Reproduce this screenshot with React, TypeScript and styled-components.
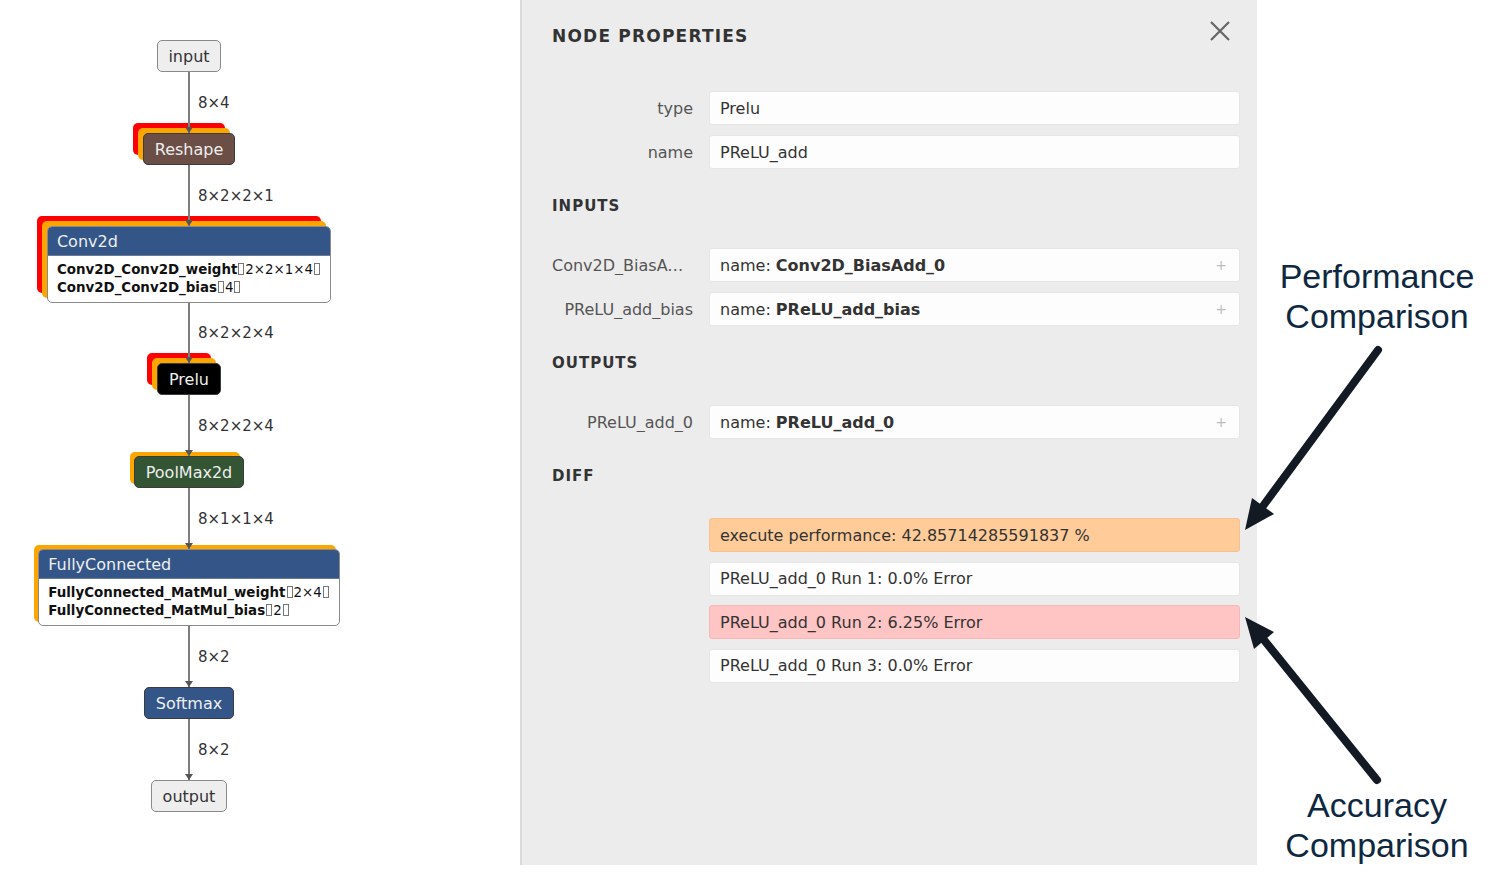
import styled, { createGlobalStyle } from 'styled-components';

const GlobalStyle = createGlobalStyle`
  html, body {
    margin: 0;
    padding: 0;
    background: #fff;
  }
  body {
    font-family: "DejaVu Sans", "Liberation Sans", sans-serif;
  }
`;

type Kind = 'io' | 'shape' | 'layer' | 'activation' | 'pool';

interface Tensor {
  name: string;
  shape: string;
}

interface GraphNode {
  title: string;
  kind: Kind;
  marks: 'none' | 'orange' | 'both';
  tensors?: Tensor[];
}

const fills: Record<Kind, string> = {
  io: '#eeeeee',
  shape: '#6b4f46',
  layer: '#335588',
  activation: '#000000',
  pool: '#335533',
};

const shadows = {
  none: 'none',
  orange: '-4px -4px 0 0 #ffa500',
  both: '-5px -5px 0 0 #ffa500, -10px -10px 0 0 #ff0000',
};

const nodes: GraphNode[] = [
  { title: 'input', kind: 'io', marks: 'none' },
  { title: 'Reshape', kind: 'shape', marks: 'both' },
  {
    title: 'Conv2d',
    kind: 'layer',
    marks: 'both',
    tensors: [
      { name: 'Conv2D_Conv2D_weight', shape: '2×2×1×4' },
      { name: 'Conv2D_Conv2D_bias', shape: '4' },
    ],
  },
  { title: 'Prelu', kind: 'activation', marks: 'both' },
  { title: 'PoolMax2d', kind: 'pool', marks: 'orange' },
  {
    title: 'FullyConnected',
    kind: 'layer',
    marks: 'orange',
    tensors: [
      { name: 'FullyConnected_MatMul_weight', shape: '2×4' },
      { name: 'FullyConnected_MatMul_bias', shape: '2' },
    ],
  },
  { title: 'Softmax', kind: 'layer', marks: 'none' },
  { title: 'output', kind: 'io', marks: 'none' },
];

// label and length of the edge that leads into each node (after the first)
const edges = [
  { label: '8×4', length: 61 },
  { label: '8×2×2×1', length: 61 },
  { label: '8×2×2×4', length: 60 },
  { label: '8×2×2×4', length: 61 },
  { label: '8×1×1×4', length: 61 },
  { label: '8×2', length: 61 },
  { label: '8×2', length: 61 },
];

const inputs = [
  { label: 'Conv2D_BiasAdd_0', value: 'Conv2D_BiasAdd_0' },
  { label: 'PReLU_add_bias', value: 'PReLU_add_bias' },
];

const diffs: { text: string; tone: 'perf' | 'ok' | 'bad' }[] = [
  { text: 'execute performance: 42.85714285591837 %', tone: 'perf' },
  { text: 'PReLU_add_0 Run 1: 0.0% Error', tone: 'ok' },
  { text: 'PReLU_add_0 Run 2: 6.25% Error', tone: 'bad' },
  { text: 'PReLU_add_0 Run 3: 0.0% Error', tone: 'ok' },
];

const toneColors = {
  perf: { bg: '#ffcc99', border: '#f5c28f' },
  ok: { bg: '#fdfdfd', border: '#e6e6e6' },
  bad: { bg: '#ffc4c4', border: '#f4b8b8' },
};

const App = () => {
  return (
    <Page>
      <GlobalStyle />
      <GraphPane>
        <GraphColumn>
          {nodes.map((node, i) => (
            <NodeGroup key={node.title}>
              {i > 0 && (
                <EdgeRow $length={edges[i - 1].length}>
                  <span />
                  <EdgeLine />
                  <EdgeLabel>{edges[i - 1].label}</EdgeLabel>
                </EdgeRow>
              )}
              {node.tensors ? (
                <Card $shadow={shadows[node.marks]}>
                  <CardHeader>{node.title}</CardHeader>
                  <CardBody>
                    {node.tensors.map(t => (
                      <div key={t.name}>
                        <b>{t.name}</b>
                        <Tofu />
                        {t.shape}
                        <Tofu />
                      </div>
                    ))}
                  </CardBody>
                </Card>
              ) : (
                <NodeBox $kind={node.kind} $shadow={shadows[node.marks]}>
                  {node.title}
                </NodeBox>
              )}
            </NodeGroup>
          ))}
        </GraphColumn>
      </GraphPane>

      <Panel>
        <PanelHeader>
          <PanelTitle>NODE PROPERTIES</PanelTitle>
          <CloseIcon width="24" height="24" viewBox="0 0 24 24">
            <path d="M3 3 L21 21 M21 3 L3 21" />
          </CloseIcon>
        </PanelHeader>

        <PropRow>
          <PropLabel>type</PropLabel>
          <ValueBox>Prelu</ValueBox>
        </PropRow>
        <PropRow>
          <PropLabel>name</PropLabel>
          <ValueBox>PReLU_add</ValueBox>
        </PropRow>

        <SectionTitle>INPUTS</SectionTitle>
        {inputs.map(item => (
          <PropRow key={item.label}>
            <PropLabel title={item.label}>{item.label}</PropLabel>
            <ValueBox>
              name:&nbsp;<b>{item.value}</b>
              <Expand>+</Expand>
            </ValueBox>
          </PropRow>
        ))}

        <SectionTitle>OUTPUTS</SectionTitle>
        <PropRow>
          <PropLabel>PReLU_add_0</PropLabel>
          <ValueBox>
            name:&nbsp;<b>PReLU_add_0</b>
            <Expand>+</Expand>
          </ValueBox>
        </PropRow>

        <SectionTitle>DIFF</SectionTitle>
        <DiffList>
          {diffs.map(d => (
            <ValueBox key={d.text} $bg={toneColors[d.tone].bg} $border={toneColors[d.tone].border}>
              {d.text}
            </ValueBox>
          ))}
        </DiffList>
      </Panel>

      <Notes>
        <Note>
          Performance
          <br />
          Comparison
        </Note>
        <Note>
          Accuracy
          <br />
          Comparison
        </Note>
      </Notes>

      <ArrowLayer width="1490" height="885" viewBox="0 0 1490 885">
        <line x1="1378" y1="350" x2="1263" y2="506" />
        <polygon points="1245,530 1274,514 1252,498" />
        <line x1="1377" y1="780" x2="1264" y2="640" />
        <polygon points="1245,617 1274,632 1254,649" />
      </ArrowLayer>
    </Page>
  );
};

export default App;

const Page = styled.div`
  position: relative;
  display: flex;
  width: 1490px;
  height: 885px;
  overflow: hidden;
`;

const GraphPane = styled.section`
  width: 520px;
  height: 865px;
  flex-shrink: 0;
`;

const GraphColumn = styled.div`
  width: 378px;
  padding-top: 40px;
  display: flex;
  flex-direction: column;
  align-items: center;
`;

const NodeGroup = styled.div`
  display: flex;
  flex-direction: column;
  align-items: center;
  width: 100%;
`;

const EdgeRow = styled.div<{ $length: number }>`
  display: grid;
  grid-template-columns: 1fr 2px 1fr;
  height: ${p => p.$length}px;
  width: 100%;
`;

const EdgeLine = styled.div`
  position: relative;
  background: #7d7d7d;

  &::after {
    content: '';
    position: absolute;
    left: -3px;
    bottom: 0;
    border-left: 4px solid transparent;
    border-right: 4px solid transparent;
    border-top: 6px solid #555;
  }
`;

const EdgeLabel = styled.span`
  align-self: center;
  padding-left: 8px;
  font-size: 15px;
  color: #333;
  white-space: nowrap;
`;

const NodeBox = styled.div<{ $kind: Kind; $shadow: string }>`
  height: 32px;
  box-sizing: border-box;
  padding: 0 10.5px;
  display: flex;
  align-items: center;
  border-radius: 5px;
  font-size: 16px;
  background: ${p => fills[p.$kind]};
  color: ${p => (p.$kind === 'io' ? '#333' : '#eeeeee')};
  border: 1px solid ${p => (p.$kind === 'io' ? '#8a8a8a' : '#3c3c3c')};
  box-shadow: ${p => p.$shadow};
`;

const Card = styled.div<{ $shadow: string }>`
  border: 1px solid #8a8a8a;
  border-radius: 5px;
  background: #fff;
  overflow: hidden;
  box-shadow: ${p => p.$shadow};
`;

const CardHeader = styled.div`
  height: 28px;
  padding: 0 9px;
  display: flex;
  align-items: center;
  background: #335588;
  color: #eeeeee;
  font-size: 16px;
  border-bottom: 1px solid #6a7a90;
`;

const CardBody = styled.div`
  padding: 5px 9px;
  font-size: 13.4px;
  line-height: 18px;
  color: #111;
  white-space: nowrap;
`;

const Tofu = styled.span`
  display: inline-block;
  width: 4px;
  height: 10px;
  margin: 0 1px;
  border: 1px solid #777;
  vertical-align: -1px;
`;

const Panel = styled.aside`
  width: 737px;
  height: 865px;
  flex-shrink: 0;
  box-sizing: border-box;
  background: #ececec;
  border-left: 2px solid #dadada;
  padding: 22px 17px 0 30px;
  color: #333;
`;

const PanelHeader = styled.div`
  display: flex;
  justify-content: space-between;
  align-items: center;
  height: 28px;
  margin-bottom: 41px;
`;

const PanelTitle = styled.h2`
  margin: 0;
  font-size: 17px;
  font-weight: bold;
  letter-spacing: 1.2px;
  color: #333;
`;

const CloseIcon = styled.svg`
  margin: -10px 8px 0 0;
  fill: none;
  stroke: #666;
  stroke-width: 2.2;
`;

const PropRow = styled.div`
  display: grid;
  grid-template-columns: 143px 1fr;
  column-gap: 14px;
  align-items: center;
  height: 34px;

  & + & {
    margin-top: 10px;
  }
`;

const PropLabel = styled.div`
  text-align: right;
  padding-right: 2px;
  font-size: 16px;
  color: #555;
  white-space: nowrap;
  overflow: hidden;
  text-overflow: ellipsis;
`;

const ValueBox = styled.div<{ $bg?: string; $border?: string }>`
  height: 34px;
  box-sizing: border-box;
  display: flex;
  align-items: center;
  padding: 0 10px;
  border-radius: 3px;
  background: ${p => p.$bg ?? '#fdfdfd'};
  border: 1px solid ${p => p.$border ?? '#e6e6e6'};
  font-size: 16px;
  color: #333;
  white-space: nowrap;

  b {
    font-weight: bold;
  }
`;

const Expand = styled.span`
  margin-left: auto;
  margin-right: 2px;
  font-size: 14px;
  color: #bdbdbd;
`;

const SectionTitle = styled.h3`
  margin: 27px 0 32px;
  height: 20px;
  line-height: 20px;
  font-size: 15px;
  font-weight: bold;
  letter-spacing: 1px;
  color: #333;
`;

const DiffList = styled.div`
  display: flex;
  flex-direction: column;
  gap: 9.5px;
  padding-left: 157px;
`;

const Notes = styled.div`
  flex: 1;
  height: 865px;
  box-sizing: border-box;
  padding: 256px 0 0 7px;
  display: flex;
  flex-direction: column;
  justify-content: space-between;
  align-items: center;
`;

const Note = styled.div`
  font-family: "Liberation Sans", Arial, sans-serif;
  font-size: 34px;
  line-height: 40px;
  color: #0e2841;
  text-align: center;
`;

const ArrowLayer = styled.svg`
  position: absolute;
  top: 0;
  left: 0;
  pointer-events: none;

  line {
    stroke: #141a24;
    stroke-width: 8;
    stroke-linecap: round;
  }
  polygon {
    fill: #141a24;
  }
`;
